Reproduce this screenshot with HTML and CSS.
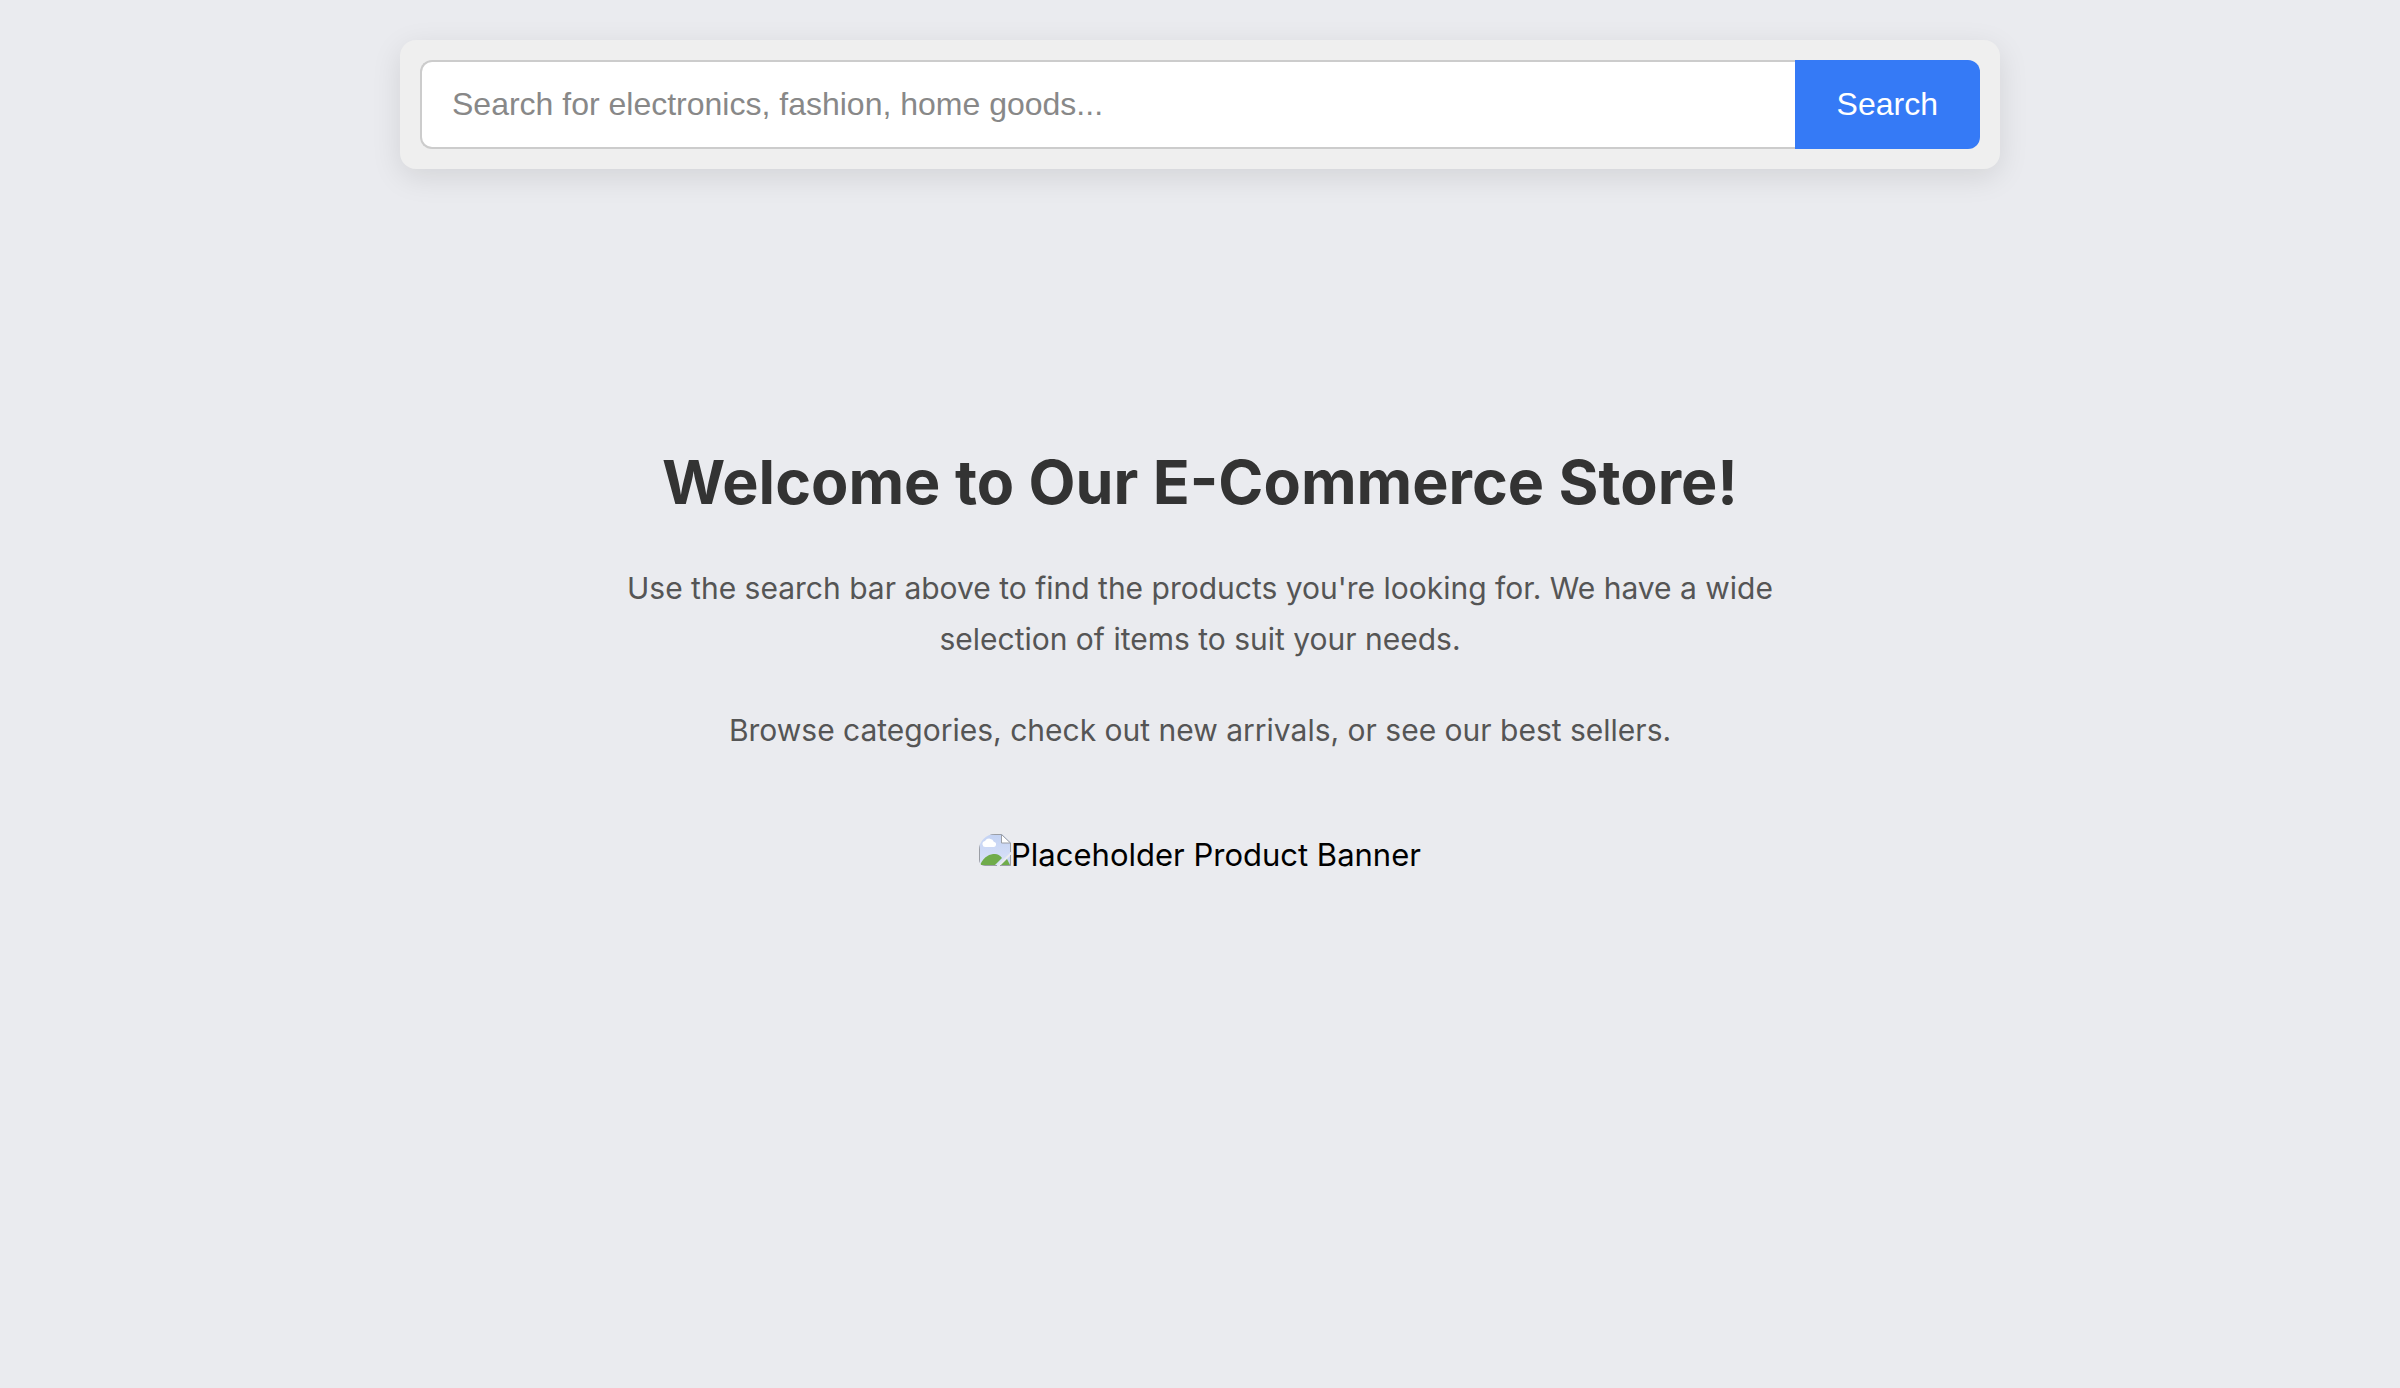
FILE: index.html
```html
<!DOCTYPE html>
<html lang="en">
<head>
<meta charset="utf-8">
<meta name="viewport" content="width=device-width, initial-scale=1">
<title>E-Commerce Store</title>
<link rel="stylesheet" href="styles.css">
</head>
<body>
<header class="site-header">
  <form class="search-bar" role="search">
    <input class="search-input" type="search" name="q" aria-label="Search products" placeholder="Search for electronics, fashion, home goods...">
    <button class="search-button" type="submit">Search</button>
  </form>
</header>
<main class="content">
  <h1 class="title">Welcome to Our E-Commerce Store!</h1>
  <p class="text">Use the search bar above to find the products you're looking for. We have a wide selection of items to suit your needs.</p>
  <p class="text">Browse categories, check out new arrivals, or see our best sellers.</p>
  <div class="banner">
    <svg class="banner-icon" viewBox="0 0 32 32" aria-hidden="true">
      <defs>
        <linearGradient id="sky" x1="0" y1="0" x2="0" y2="1">
          <stop offset="0" stop-color="#c3d2f3"/>
          <stop offset="1" stop-color="#dbe3f8"/>
        </linearGradient>
      </defs>
      <path d="M0 0H23L32 9V18L18 32H0Z" fill="url(#sky)"/>
      <path d="M32 21V32H21Z" fill="#c9d6f4"/>
      <path d="M7 13a3 3 0 0 1-1-6 5 5 0 0 1 9 1 2.500 2.500 0 0 1-1 5Z" fill="#fff"/>
      <path d="M1 31C5 22 11 20 16 20q4 0 7 4L16 31Z" fill="#70ac4b"/>
      <path d="M22 31L28 25L31 31Z" fill="#70ac4b"/>
      <path d="M22.500 .5V9H31.500Z" fill="#fff"/>
      <path d="M.5 31.500V.5H22.500L31.500 9V18M22.500 .5V9H31.500M.5 31.500H18M21 31.500H31.500V21" fill="none" stroke="#9b9ea5"/>
    </svg>
    <span>Placeholder Product Banner</span>
  </div>
</main>
</body>
</html>
```
FILE: styles.css
```css
* {
  box-sizing: border-box;
}

body {
  margin: 0;
  min-height: 100vh;
  background: #eaebef;
  font-family: Inter, "Liberation Sans", sans-serif;
  font-size: 31px;
}

.site-header {
  padding: 40px;
}

.search-bar {
  display: flex;
  max-width: 1600px;
  margin: 0 auto;
  padding: 20px;
  border-radius: 16px;
  background: #efefef;
  box-shadow: 0 8px 30px rgba(0, 0, 0, 0.1);
}

.search-input,
.search-button {
  margin: 0;
  font-family: "Liberation Sans", Arial, sans-serif;
  font-size: 32px;
  line-height: 37px;
}

.search-input {
  flex: 1;
  min-width: 0;
  padding: 24px 30px;
  border: 2px solid #ccc;
  border-right: 0;
  border-radius: 12px 0 0 12px;
  background: #fff;
  appearance: none;
  outline: none;
}

.search-input::placeholder {
  color: #888;
}

.search-button {
  padding: 24px 42px;
  border: 0;
  border-radius: 0 12px 12px 0;
  background: #357af6;
  color: #fff;
  cursor: pointer;
}

.content {
  max-width: 1280px;
  margin: 0 auto;
  padding: 232px 40px 80px;
  text-align: center;
}

.title {
  margin: 0 0 40px;
  color: #333;
  font-size: 61px;
  font-weight: 700;
  line-height: 82px;
}

.text {
  margin: 0 0 40px;
  color: #555;
  font-size: 30px;
  line-height: 51px;
}

.banner {
  display: flex;
  justify-content: center;
  align-items: baseline;
  margin-top: 78px;
  color: #000;
  line-height: 38px;
}

.banner-icon {
  flex: none;
  width: 32px;
  height: 32px;
  border-radius: 16px 0 0 6px;
}
```
